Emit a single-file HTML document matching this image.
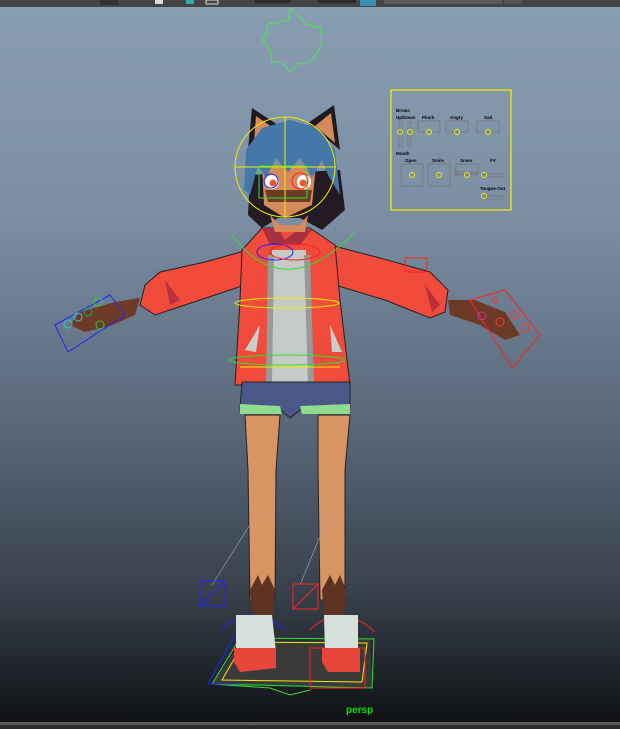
<!DOCTYPE html>
<html><head><style>
html,body{margin:0;padding:0;width:620px;height:729px;overflow:hidden;background:#111}
svg{display:block}
</style></head><body>
<svg width="620" height="729" viewBox="0 0 620 729" xmlns="http://www.w3.org/2000/svg" font-family="Liberation Sans, sans-serif">
<defs>
<linearGradient id="bg" x1="0" y1="0" x2="0" y2="1">
<stop offset="0" stop-color="#8a9eb2"/>
<stop offset="0.3" stop-color="#7b8ea3"/>
<stop offset="0.6" stop-color="#576677"/>
<stop offset="0.82" stop-color="#38414c"/>
<stop offset="1" stop-color="#0f1114"/>
</linearGradient>
</defs>
<rect x="0" y="0" width="620" height="722" fill="url(#bg)"/>
<rect x="0" y="722" width="620" height="3" fill="#5a5a5a"/>
<rect x="0" y="725" width="620" height="4" fill="#2b2b2b"/>
<rect x="0" y="0" width="620" height="7" fill="#444"/>
<rect x="100" y="0" width="18" height="5" fill="#333"/>
<rect x="155" y="0" width="8" height="4" fill="#ddd"/>
<rect x="186" y="0" width="8" height="4" fill="#3aa"/>
<rect x="206" y="0" width="12" height="4" fill="none" stroke="#ddd"/>
<rect x="255" y="0" width="35" height="3" fill="#2a2a2a"/>
<rect x="318" y="0" width="38" height="3" fill="#2a2a2a"/>
<rect x="360" y="0" width="16" height="6" fill="#3b8fb0"/>
<rect x="384" y="0" width="118" height="4" fill="#5a5a5a"/>
<rect x="504" y="0" width="18" height="4" fill="#555"/>
<path d="M290 8 L288 20 L280 22 L268 24 L266 34 L262 40 L270 50 L272 62 L282 62 L290 72 L298 64 L310 62 L318 52 L322 40 L320 28 L306 24 L300 18 Z" fill="none" stroke="#3f3" stroke-width="1" stroke-dasharray="3 1"/>
<g stroke="#ee0" fill="none" stroke-width="1.3">
<path d="M391 140 V90 H511 V210 H391 V140"/>
</g>
<g font-size="4.5" font-weight="bold" fill="#000">
<text x="396" y="112">Brows</text><text x="396" y="119">Up/Down</text>
<text x="422" y="119">Pinch</text><text x="450" y="119">Angry</text><text x="484" y="119">Sad</text>
<text x="396" y="155">Mouth</text><text x="405" y="162">Open</text><text x="432" y="162">Smile</text>
<text x="460" y="162">Sneer</text><text x="490" y="162">FV</text><text x="480" y="190">Tongue-Out</text>
</g>
<g stroke="#777" fill="none" stroke-width="0.8">
<rect x="399" y="122" width="3" height="24"/><rect x="408" y="122" width="3" height="24"/>
<rect x="418" y="121" width="22" height="11"/><rect x="446" y="121" width="22" height="11"/><rect x="477" y="121" width="22" height="11"/>
<rect x="401" y="164" width="22" height="22"/><rect x="428" y="164" width="22" height="22"/>
<rect x="456" y="164" width="22" height="10"/><rect x="455" y="172" width="22" height="3"/>
<rect x="483" y="174" width="20" height="3"/><rect x="483" y="196" width="20" height="3"/>
</g>
<g stroke="#ee0" fill="none" stroke-width="1">
<circle cx="400" cy="132" r="2.5"/><circle cx="410" cy="132" r="2.5"/>
<circle cx="429" cy="132" r="2.5"/><circle cx="457" cy="132" r="2.5"/><circle cx="488" cy="132" r="2.5"/>
<circle cx="412" cy="175" r="2.5"/><circle cx="439" cy="175" r="2.5"/><circle cx="467" cy="175" r="2.5"/>
<circle cx="484" cy="175" r="2.5"/><circle cx="484" cy="196" r="2.5"/>
</g>
<path d="M248 250 L205 262 L160 272 L145 285 L140 305 L155 315 L200 300 L245 285 Z" fill="#f04b3b" stroke="#222" stroke-width="1"/>
<path d="M330 245 L380 258 L430 272 L448 290 L445 312 L430 318 L385 300 L335 285 Z" fill="#f04b3b" stroke="#222" stroke-width="1"/>
<path d="M165 280 L180 300 L170 305 Z M425 285 L432 312 L440 305 Z" fill="#b8303a"/>
<path d="M140 298 L115 302 L80 312 L70 325 L85 332 L110 326 L135 315 Z" fill="#6e3a28"/>
<path d="M448 300 L475 300 L505 312 L520 335 L505 340 L480 325 L450 315 Z" fill="#6e3a28"/>
<g fill="none" stroke-width="1">
<path d="M55 325 L110 295 L125 315 L68 352 Z" stroke="#22f"/>
<circle cx="68" cy="324" r="4" stroke="#3cc"/><circle cx="78" cy="317" r="4" stroke="#3cc"/><circle cx="88" cy="312" r="4" stroke="#1a6"/><circle cx="98" cy="302" r="4" stroke="#3c3"/><circle cx="100" cy="325" r="4" stroke="#3c3"/>
<path d="M470 300 L505 290 L540 335 L512 368 Z" stroke="#f22"/>
<circle cx="482" cy="316" r="4" stroke="#c3a"/><circle cx="500" cy="322" r="4" stroke="#f33"/><circle cx="515" cy="315" r="4" stroke="#f33"/><circle cx="525" cy="328" r="4" stroke="#f33"/><circle cx="495" cy="300" r="3" stroke="#f33"/>
<rect x="405" y="258" width="22" height="14" stroke="#f22"/>
</g>
<!-- hair back -->
<path d="M250 175 L248 215 L262 228 L278 218 L300 218 L322 230 L345 210 L340 170 Z" fill="#231a24"/>
<!-- ears -->
<path d="M248 150 L252 108 L278 125 Z" fill="#1e1a20"/><path d="M254 143 L256 116 L272 127 Z" fill="#d68a5a"/>
<path d="M340 150 L334 105 L308 123 Z" fill="#1e1a20"/><path d="M335 143 L331 113 L315 126 Z" fill="#d68a5a"/>
<!-- jacket body -->
<path d="M242 250 L262 228 L310 228 L335 245 L340 300 L350 385 L235 385 L240 300 Z" fill="#f04b3b" stroke="#222" stroke-width="1"/>
<path d="M262 228 L278 228 L285 240 L300 228 L312 230 L300 245 L270 245 Z" fill="#a83040"/>
<path d="M272 250 L306 250 L308 382 L270 382 Z" fill="#c6cbc7"/>
<path d="M268 255 L274 255 L272 382 L266 382 Z M304 255 L310 255 L314 382 L308 382 Z" fill="#999"/>
<path d="M260 325 L245 350 L256 352 Z M330 325 L342 352 L332 352 Z" fill="#c8d0cc"/>
<!-- face -->
<path d="M262 165 L264 205 L285 218 L312 205 L316 165 Z" fill="#d68a5a"/>
<path d="M265 190 L312 190 L310 202 L268 202 Z" fill="#6b3d26"/>
<circle cx="272" cy="182" r="7" fill="#fff"/><circle cx="304" cy="182" r="7" fill="#fff"/>
<circle cx="273" cy="183" r="3.5" fill="#e53"/><circle cx="303" cy="183" r="3.5" fill="#e53"/>
<!-- hair -->
<path d="M244 190 L246 150 L262 128 L290 120 L318 128 L335 150 L340 195 L328 175 L322 160 L312 178 L300 158 L288 172 L276 158 L266 178 L258 165 L250 195 Z" fill="#4478a8"/>
<path d="M270 215 L280 225 L300 225 L308 215 L305 232 L275 232 Z" fill="#d68a5a"/>
<path d="M242 382 L350 382 L350 408 L300 410 L290 418 L280 410 L240 410 Z" fill="#4a5888" stroke="#222" stroke-width="1"/>
<path d="M240 404 L280 406 L282 414 L240 414 Z M300 406 L350 404 L350 414 L302 414 Z" fill="#8fdc8f"/>
<path d="M245 415 L280 415 L276 470 L275 600 L250 600 L248 470 Z" fill="#d89462" stroke="#222" stroke-width="1"/>
<path d="M318 415 L350 415 L345 470 L345 600 L320 600 L318 470 Z" fill="#d89462" stroke="#222" stroke-width="1"/>
<path d="M250 590 L258 575 L262 585 L268 575 L275 590 L273 615 L253 615 Z" fill="#5e3322"/>
<path d="M322 590 L330 575 L335 585 L340 575 L346 590 L344 615 L324 615 Z" fill="#5e3322"/>
<line x1="258" y1="512" x2="212" y2="585" stroke="#aaa" stroke-width="0.6"/>
<line x1="330" y1="512" x2="300" y2="585" stroke="#aaa" stroke-width="0.6"/>
<path d="M240 643 L370 640 L372 688 L212 684 Z" fill="#3a3a3a"/>
<g fill="none" stroke-width="1">
<path d="M240 638 L374 639 L372 688 L212 684 Z" stroke="#3d3"/>
<path d="M244 642 L367 643 L362 682 L222 680 Z" stroke="#ee0"/>
<path d="M212 684 L270 688 L290 695 L310 690" stroke="#3d3"/>
<rect x="200" y="581" width="25" height="25" stroke="#22f"/><line x1="200" y1="606" x2="225" y2="581" stroke="#22f"/>
<rect x="293" y="584" width="25" height="25" stroke="#f22"/><line x1="293" y1="609" x2="318" y2="584" stroke="#f22"/>
<path d="M222 630 Q250 600 285 630" stroke="#22f"/><path d="M310 630 Q340 600 375 632" stroke="#f22"/>
<path d="M310 648 H365 V688 H310 Z" stroke="#f22"/>
<path d="M235 635 L208 684 L240 684" stroke="#22f"/>
</g>
<path d="M236 615 L272 615 L276 652 L236 652 Z" fill="#d8e0dc"/>
<path d="M234 648 L276 648 L276 668 L240 672 L234 662 Z" fill="#e8463a"/>
<path d="M324 615 L358 615 L358 652 L325 652 Z" fill="#d8e0dc"/>
<path d="M322 648 L360 648 L360 672 L328 672 L322 662 Z" fill="#e8463a"/>
<g fill="none" stroke-width="1">
<circle cx="285" cy="167" r="50" stroke="#ee0"/>
<line x1="235" y1="167" x2="336" y2="167" stroke="#ee0"/>
<line x1="285" y1="117" x2="285" y2="217" stroke="#ee0"/>
<rect x="259" y="166" width="48" height="32" stroke="#3d3"/>
<circle cx="271" cy="181" r="7" stroke="#22f"/><circle cx="300" cy="181" r="8" stroke="#f22"/>
<path d="M232 235 Q285 305 355 232" stroke="#3d3"/>
<ellipse cx="275" cy="252" rx="18" ry="8" stroke="#22f"/><ellipse cx="295" cy="252" rx="25" ry="8" stroke="#f22"/>
<ellipse cx="287" cy="303" rx="52" ry="5" stroke="#ee0"/>
<ellipse cx="287" cy="360" rx="58" ry="5" stroke="#3d3"/>
<line x1="240" y1="367" x2="340" y2="367" stroke="#ee0"/>
</g>
<text x="346" y="713" font-size="10" font-weight="bold" fill="#1d1">persp</text>
</svg>
</body></html>
